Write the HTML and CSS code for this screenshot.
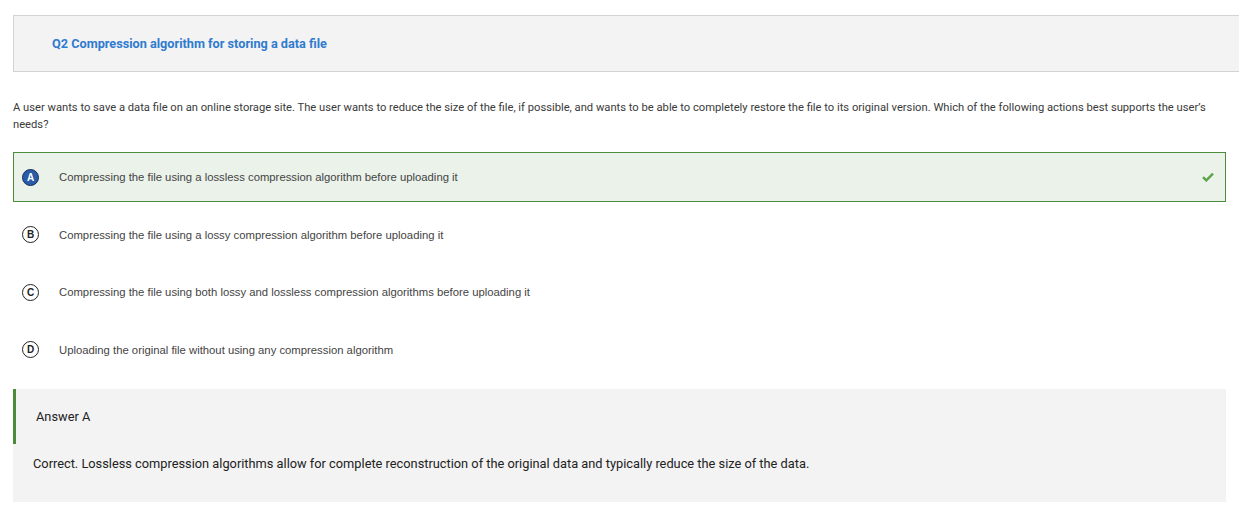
FILE: index.html
```html
<!DOCTYPE html>
<html lang="en">
<head>
    <meta charset="UTF-8">
    <meta name="viewport" content="width=device-width, initial-scale=1.0">
    <title>Q2 Compression algorithm</title>
    <link rel="stylesheet" href="styles.css">
</head>
<body>

    <!-- question title -->
    <div class="q-header">
        <h2>Q2 Compression algorithm for storing a data file</h2>
    </div>

    <p class="q-text">A user wants to save a data file on an online storage site. The user wants to reduce the size of the file, if possible, and wants to be able to completely restore the file to its original version. Which of the following actions best supports the user’s needs?</p>

    <!-- options -->
    <div class="options">
        <div class="option correct">
            <span class="letter filled">A</span>
            <span class="opt-text">Compressing the file using a lossless compression algorithm before uploading it</span>
            <svg class="check" width="12" height="10" viewBox="0 0 12 10">
                <path d="M1 5.2 L4.3 8.4 L11 1.6" fill="none" stroke="#5ea348" stroke-width="2.4"/>
            </svg>
        </div>
        <div class="option">
            <span class="letter">B</span>
            <span class="opt-text">Compressing the file using a lossy compression algorithm before uploading it</span>
        </div>
        <div class="option">
            <span class="letter">C</span>
            <span class="opt-text">Compressing the file using both lossy and lossless compression algorithms before uploading it</span>
        </div>
        <div class="option">
            <span class="letter">D</span>
            <span class="opt-text">Uploading the original file without using any compression algorithm</span>
        </div>
    </div>

    <!-- answer -->
    <div class="answer">
        <div class="answer-title">Answer A</div>
        <p class="answer-text">Correct. Lossless compression algorithms allow for complete reconstruction of the original data and typically reduce the size of the data.</p>
    </div>

</body>
</html>
```

FILE: styles.css
```css
body, html {
    margin: 0;
    padding: 0;
    font-family: Roboto, "Liberation Sans", sans-serif;
    background-color: white;
    color: #333;
}

body {
    padding: 15px 0 0 13px;
}

/* title box */
.q-header {
    height: 54px;
    display: flex;
    align-items: center;
    padding-left: 38px;
    padding-bottom: 1px;
    background-color: #f3f3f3;
    border: 1px solid #d3d3d3;
    border-right: none;
}

.q-header h2 {
    margin: 0;
    font-size: 12.7px;
    font-weight: bold;
    color: #2f7bcf;
}

.q-text {
    margin: 27px 20px 19px 0;
    font-size: 11.2px;
    line-height: 17px;
    color: #3a3a3a;
}

/* options */
.options {
    width: 1213px;
    display: flex;
    flex-direction: column;
    gap: 7.5px;
}

.option {
    height: 50px;
    display: flex;
    align-items: center;
    padding: 0 0 0 9px;
    box-sizing: border-box;
    font-family: "Liberation Sans", Arial, sans-serif;
    font-size: 11.3px;
    color: #444;
}

.option.correct {
    border: 1px solid #4b8b3b;
    background-color: #eaf2ea;
    padding-left: 8px;
}

.letter {
    width: 15px;
    height: 15px;
    border: 1.2px solid #222;
    border-radius: 50%;
    display: flex;
    justify-content: center;
    align-items: center;
    font-size: 10px;
    font-weight: bold;
    color: #222;
    margin-right: 20px;
}

.letter.filled {
    background-color: #2a5ca8;
    border-color: #1b2f57;
    color: white;
}

.opt-text {
    flex: 1;
}

.check {
    margin-right: 11px;
}

/* answer */
.answer {
    width: 1213px;
    margin-top: 14px;
    background-color: #f3f3f3;
    padding-bottom: 30px;
}

.answer-title {
    height: 55px;
    display: flex;
    align-items: center;
    padding-left: 20px;
    border-left: 3px solid #4b8b3b;
    font-size: 12.8px;
    color: #222;
}

.answer-text {
    margin: 0;
    padding: 12px 0 0 20px;
    font-size: 12.8px;
    line-height: 16px;
    color: #222;
}
```
